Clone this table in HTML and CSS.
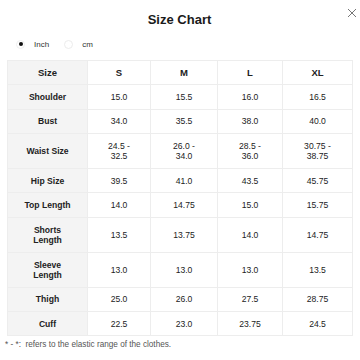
FILE: index.html
```html
<!DOCTYPE html>
<html>
<head>
<meta charset="utf-8">
<link rel="stylesheet" href="styles.css">
</head>
<body>
<div class="page">
  <div class="header">
    <h1 class="title">Size Chart</h1>
    <span class="close" aria-label="close">
      <svg width="10" height="10" viewBox="0 0 10 10"><path d="M1 1L9 9M9 1L1 9" stroke="#777" stroke-width="1" fill="none"/></svg>
    </span>
  </div>
  <div class="units">
    <label class="unit"><span class="radio on"></span><span>Inch</span></label>
    <label class="unit"><span class="radio"></span><span>cm</span></label>
  </div>
  <table class="chart">
    <colgroup>
      <col class="c0"><col class="c1"><col class="c2"><col class="c3"><col class="c4">
    </colgroup>
    <thead>
      <tr><th class="lab">Size</th><th>S</th><th>M</th><th>L</th><th>XL</th></tr>
    </thead>
    <tbody>
      <tr><th class="lab">Shoulder</th><td>15.0</td><td>15.5</td><td>16.0</td><td>16.5</td></tr>
      <tr><th class="lab">Bust</th><td>34.0</td><td>35.5</td><td>38.0</td><td>40.0</td></tr>
      <tr class="tall"><th class="lab">Waist Size</th><td>24.5 -<br>32.5</td><td>26.0 -<br>34.0</td><td>28.5 -<br>36.0</td><td>30.75 -<br>38.75</td></tr>
      <tr><th class="lab">Hip Size</th><td>39.5</td><td>41.0</td><td>43.5</td><td>45.75</td></tr>
      <tr><th class="lab">Top Length</th><td>14.0</td><td>14.75</td><td>15.0</td><td>15.75</td></tr>
      <tr class="tall"><th class="lab">Shorts<br>Length</th><td>13.5</td><td>13.75</td><td>14.0</td><td>14.75</td></tr>
      <tr class="tall"><th class="lab">Sleeve<br>Length</th><td>13.0</td><td>13.0</td><td>13.0</td><td>13.5</td></tr>
      <tr><th class="lab">Thigh</th><td>25.0</td><td>26.0</td><td>27.5</td><td>28.75</td></tr>
      <tr><th class="lab">Cuff</th><td>22.5</td><td>23.0</td><td>23.75</td><td>24.5</td></tr>
    </tbody>
  </table>
  <p class="note">* - *:&nbsp; refers to the elastic range of the clothes.</p>
</div>
</body>
</html>
```

FILE: styles.css
```css
html, body {
  margin: 0;
  padding: 0;
  background: #fff;
}
.page {
  position: relative;
  width: 360px;
  height: 360px;
  padding: 0 8px 0 7px;
  box-sizing: border-box;
  font-family: "Liberation Sans", Arial, sans-serif;
  color: #222;
}
.header {
  padding-top: 6px;
  height: 28px;
  display: flex;
  justify-content: center;
  align-items: center;
}
.title {
  margin: 0;
  font-size: 13px;
  font-weight: bold;
  line-height: 28px;
  color: #1a1a1a;
}
.close {
  position: absolute;
  top: 8px;
  right: 3px;
  width: 10px;
  height: 10px;
  display: block;
}
.close svg { display: block; }
.units {
  height: 20px;
  display: flex;
  align-items: center;
  padding-left: 9px;
  font-size: 8px;
  color: #333;
}
.unit {
  display: flex;
  align-items: center;
  margin-right: 15px;
}
.radio {
  width: 9px;
  height: 9px;
  border-radius: 50%;
  box-sizing: border-box;
  border: 1px solid #ececec;
  margin-right: 9px;
  position: relative;
  background: #fff;
}
.radio.on {
  border-color: #f0f0f0;
}
.radio.on::after {
  content: "";
  position: absolute;
  left: 1.5px;
  top: 1.5px;
  width: 4px;
  height: 4px;
  border-radius: 50%;
  background: #111;
}
.chart {
  margin-top: 6px;
  width: 345px;
  border-collapse: collapse;
  table-layout: fixed;
}
.c0 { width: 80px; }
.c1 { width: 63px; }
.c2 { width: 67px; }
.c3 { width: 65px; }
.c4 { width: 70px; }
.chart th, .chart td {
  border: 1px solid #ededed;
  text-align: center;
  vertical-align: middle;
  font-size: 8.6px;
  line-height: 10px;
  padding: 0 2px;
  height: 23.4px;
  color: #222;
}
.chart th { font-weight: bold; }
.chart thead th {
  font-size: 9.5px;
}
.chart .lab {
  background: #f4f4f4;
}
.chart tr.tall th, .chart tr.tall td {
  height: 33.9px;
}
.note {
  margin: 4px 0 0 -2px;
  font-size: 8.2px;
  color: #555;
}
```
